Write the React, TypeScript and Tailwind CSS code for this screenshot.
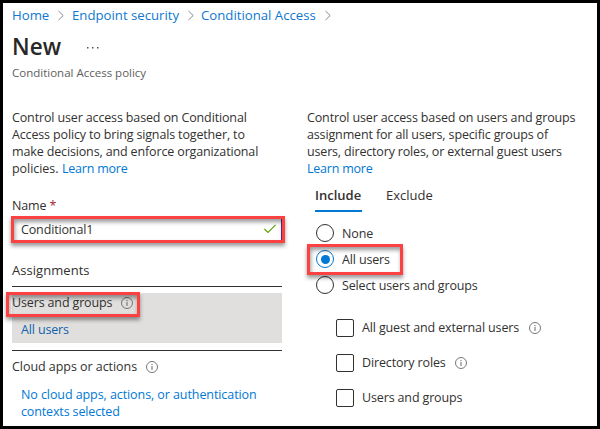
import React from "react";

const Info = () => (
  <svg width="12" height="12" viewBox="0 0 12 12" className="block shrink-0" fill="none" stroke="#6b6967">
    <circle cx="6" cy="6" r="5.5" strokeWidth="0.9" />
    <path d="M6 5v4M6 3v1.1" strokeWidth="1" />
  </svg>
);

const Crumb = ({ text, className }: { text: string; className: string }) => (
  <>
    <span className={`text-[#0f78d0] ${className}`}>{text}</span>
    <svg width="6" height="11" viewBox="0 0 6 11" className="shrink-0" fill="none" stroke="#8a8886" strokeWidth="1">
      <path d="M.5 1 5.2 5.5 .5 10" />
    </svg>
  </>
);

const Radio = ({ label, on }: { label: string; on?: boolean }) => (
  <div className="flex h-[26px] items-center gap-2">
    <span className={`flex size-[18px] items-center justify-center rounded-full border ${on ? "border-[#0078d4]" : "border-[#323130]"}`}>
      {on && <span className="size-[9px] rounded-full bg-[#0078d4]" />}
    </span>
    <span>{label}</span>
  </div>
);

const Check = ({ label, info, className = "" }: { label: string; info?: boolean; className?: string }) => (
  <div className="flex h-[35px] items-center">
    <span className="mr-2 size-[18px] rounded-[2px] border border-[#323130]" />
    <span className={className}>{label}</span>
    {info && <Info />}
  </div>
);

const redBox = "absolute border-[3px] border-[#fb4141] shadow-[0px_3px_4px_rgba(0,0,0,0.4),inset_1px_3px_4px_rgba(0,0,0,0.4)]";

export default function App() {
  return (
    <div className="relative h-[429px] w-[600px] overflow-hidden border-[3px] border-black bg-white pl-[9px] font-['Open_Sans','Noto_Sans',sans-serif] text-[12.5px] leading-[17px] tracking-[-0.14px] whitespace-nowrap text-[#323130]">
      <nav className="flex h-[25px] items-center text-[13.2px] tracking-[0px]">
        <Crumb text="Home" className="mr-[9px] w-[37px]" />
        <span className="w-[8px]" />
        <Crumb text="Endpoint security" className="mr-[9px] w-[107px]" />
        <span className="w-[7px]" />
        <Crumb text="Conditional Access" className="mr-[9px] w-[115px]" />
      </nav>
      <header className="h-[78px]">
        <div className="flex h-[38px] items-center">
          <h1 className="w-[75px] text-[22.5px] leading-[30px] font-semibold tracking-[0.1px] text-[#292827]">New</h1>
          <svg width="12" height="2" viewBox="0 0 12 2" className="mt-[2px]" fill="#55534f">
            <path d="M0 0h1.5v1.5H0zM5 0h1.5v1.5H5zM10 0h1.5v1.5H10z" />
          </svg>
        </div>
        <p className="-mt-px text-[11.5px] leading-[15px] tracking-[0px] text-[#605e5c]">Conditional Access policy</p>
      </header>
      <main className="flex">
        <section className="w-[270px]">
          <p className="mt-[3px]">
            <span className="block">Control user access based on Conditional</span>
            <span className="block tracking-[-0.15px]">Access policy to bring signals together, to</span>
            <span className="block">make decisions, and enforce organizational</span>
            <span className="flex">
              <span className="w-[50px] tracking-[-0.05px]">policies.</span>
              <a className="text-[#0078d4] tracking-[-0.22px]">Learn more</a>
            </span>
          </p>
          <div className="mt-[20px]">Name <span className="text-[#a4262c]">*</span></div>
          <div className="mt-[3px] flex h-[24px] items-center justify-between border-r border-[#5c2d91] pr-[5px] pl-[9px]">
            <span>Conditional1</span>
            <svg width="12" height="10" viewBox="0 0 12 10" fill="none" stroke="#57a300" strokeWidth="1.1">
              <path d="M.4 5 4 8.4 11.6.8" />
            </svg>
          </div>
          <div className="mt-[21px] h-[25px] border-b border-[#323130] text-[13px] tracking-[0.05px]">Assignments</div>
          <div className="mt-[6px] h-[50px] bg-[#e1dfdd]">
            <div className="flex h-[19px] items-center"><span className="w-[109px]">Users and groups</span><Info /></div>
            <div className="mt-[9px] pl-[9px] text-[#0f62ac]">All users</div>
          </div>
          <div className="mt-[7px] border-t border-[#323130] pt-[7px]">
            <div className="flex items-center"><span className="w-[134px] tracking-[-0.05px]">Cloud apps or actions</span><Info /></div>
            <div className="mt-[11px] pl-[9px] text-[#0078d4]">
              <span className="block tracking-[-0.08px]">No cloud apps, actions, or authentication</span>
              <span className="block">contexts selected</span>
            </div>
          </div>
        </section>
        <section className="ml-[25px] w-[280px]">
          <p className="mt-[3px]">
            <span className="block">Control user access based on users and groups</span>
            <span className="block">assignment for all users, specific groups of</span>
            <span className="block tracking-[-0.17px]">users, directory roles, or external guest users</span>
            <a className="block text-[#0078d4] tracking-[-0.22px]">Learn more</a>
          </p>
          <div className="mt-[10px] ml-[8px] flex h-[25px] gap-[24px] text-[13px] tracking-[0px]">
            <span className="w-[47px] border-b-2 border-[#0078d4] font-semibold">Include</span>
            <span>Exclude</span>
          </div>
          <div className="mt-[8px] ml-[9px]">
            <Radio label="None" />
            <Radio label="All users" on />
            <Radio label="Select users and groups" />
          </div>
          <div className="mt-[12px] ml-[29px]">
            <Check label="All guest and external users" info className="w-[167px]" />
            <Check label="Directory roles" info className="w-[93px]" />
            <Check label="Users and groups" />
          </div>
        </section>
      </main>
      <div className={`${redBox} top-[213px] left-[8px] h-[27px] w-[274px]`} />
      <div className={`${redBox} top-[289px] left-[3px] h-[25px] w-[134px]`} />
      <div className={`${redBox} top-[241px] left-[304px] h-[31px] w-[96px]`} />
    </div>
  );
}
